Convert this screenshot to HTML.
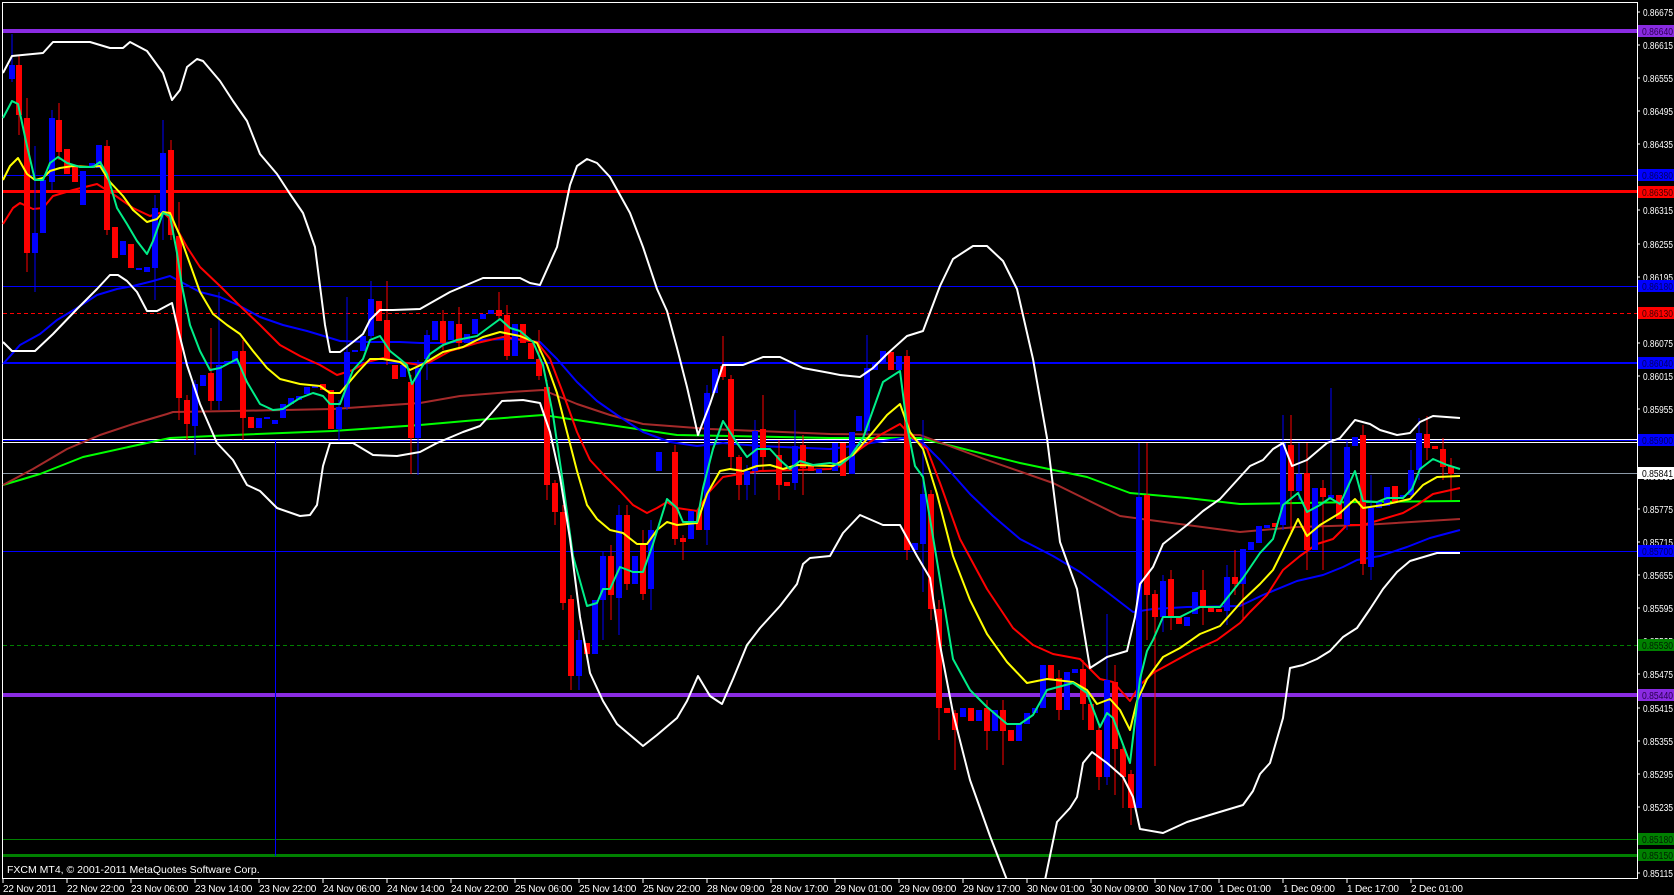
<!DOCTYPE html>
<html><head><meta charset="utf-8"><style>
html,body{margin:0;padding:0;background:#000;}
body{width:1674px;height:895px;overflow:hidden;}
svg{display:block;}
text{font-family:"Liberation Sans",sans-serif;font-size:11px;}
.p text{font-size:10px;}
.t text{font-size:10px;letter-spacing:-0.2px;}
</style></head><body>
<svg width="1674" height="895" viewBox="0 0 1674 895" xmlns="http://www.w3.org/2000/svg">
<rect width="1674" height="895" fill="#000"/>
<path d="M2.5 2.5H1637.5V878.5H2.5Z" fill="none" stroke="#fff" stroke-width="1"/>
<g shape-rendering="crispEdges">
<rect x="3" y="29" width="1634" height="4" fill="#8a2be2"/>
<rect x="3" y="175" width="1634" height="1" fill="#0000ff"/>
<rect x="3" y="190" width="1634" height="3" fill="#ff0000"/>
<rect x="3" y="286" width="1634" height="1" fill="#0000ff"/>
<line x1="3" y1="313.5" x2="1637" y2="313.5" stroke="#ff0000" stroke-dasharray="4,3"/>
<rect x="3" y="362" width="1634" height="2" fill="#0000ff"/>
<rect x="3" y="439" width="1634" height="1" fill="#fff"/>
<rect x="3" y="440" width="1634" height="1" fill="#0000ff"/>
<rect x="3" y="442" width="1634" height="1" fill="#fff"/>
<rect x="3" y="473" width="1634" height="1" fill="#8c9aa8"/>
<rect x="3" y="551" width="1634" height="1" fill="#0000ff"/>
<line x1="3" y1="645.5" x2="1637" y2="645.5" stroke="#008000" stroke-dasharray="4,3"/>
<rect x="3" y="693" width="1634" height="4" fill="#8a2be2"/>
<rect x="3" y="839" width="1634" height="1" fill="#008000"/>
<rect x="3" y="854" width="1634" height="3" fill="#008000"/>
<rect x="275" y="441" width="1" height="415" fill="#0000ff"/>
</g>
<g fill="none" stroke-width="2" stroke-linejoin="round">
<polyline stroke="#00ff00" points="3,485 40,474 83,457 133,446 170,438 233,435 333,431 420,425 477,420 543,415 610,425 677,435 830,438 920,438 1020,463 1087,477 1130,493 1187,498 1240,504 1297,503 1363,502 1460,501"/>
<polyline stroke="#a52a2a" points="3,485 33,469 67,449 100,435 133,424 167,414 173,412 233,411 333,409 420,403 460,396 510,392 543,390 577,404 610,415 643,424 710,429 830,434 920,435 987,460 1053,483 1120,516 1187,525 1240,532 1297,527 1363,525 1460,519"/>
<polyline stroke="#0000ff" points="3,364 20,345 40,334 57,320 77,308 97,295 117,289 133,286 153,281 170,276 183,283 200,292 220,297 240,306 260,317 283,325 307,331 327,337 340,341 367,342 400,342 420,343 443,343 477,340 510,339 540,342 557,359 577,382 597,401 617,415 643,432 670,442 697,446 723,443 760,446 830,449 853,446 877,442 903,438 923,443 940,460 970,494 993,516 1020,539 1053,556 1080,572 1107,592 1133,612 1153,609 1187,607 1240,606 1263,595 1297,581 1323,575 1343,567 1357,560 1380,556 1407,547 1430,538 1460,530"/>
<polyline stroke="#ff0000" points="3,224 13,208 20,203 33,209 43,208 53,196 73,190 97,184 113,194 133,208 150,216 163,212 173,222 187,247 200,267 220,286 240,306 260,325 280,345 300,356 320,365 337,375 353,370 367,362 383,358 400,362 420,365 430,362 450,351 477,343 503,337 523,340 537,342 550,359 563,393 577,432 590,460 603,474 620,491 633,505 647,513 657,508 667,502 677,508 697,511 710,491 723,477 740,474 760,471 830,469 840,466 860,449 880,435 900,424 913,438 927,449 940,483 960,539 987,589 1013,628 1033,645 1053,654 1080,659 1100,679 1113,682 1130,701 1140,685 1153,673 1173,662 1193,651 1217,640 1240,623 1250,612 1267,595 1283,570 1300,556 1317,544 1333,539 1347,525 1363,525 1383,519 1403,513 1417,505 1433,494 1460,488"/>
</g>
<path fill="none" stroke="#ff0000" stroke-width="1" d="M19 56V135M27 98V272M59 103V160M107 140V235M171 140V240M179 202V420M187 395V440M211 328V410M243 340V440M387 281V365M411 375V474M443 310V350M459 307V350M499 292V320M507 305V360M539 330V380M547 380V500M555 480V525M563 505V610M571 595V690M611 545V620M627 505V590M643 530V600M675 445V545M683 535V560M723 336V380M731 375V470M739 455V500M763 395V470M779 440V500M803 435V495M907 350V560M931 490V620M939 600V740M955 710V770M987 700V750M1003 700V765M1059 670V720M1083 660V720M1099 725V790M1115 665V795M1123 745V808M1131 770V825M1147 443V640M1155 590V766M1171 570V630M1203 570V625M1235 550V595M1243 560V620M1291 415V535M1307 443V570M1323 480V570M1363 425V575M1427 416V460M1443 438V480M1451 458V500"/>
<path fill="none" stroke="#0000ff" stroke-width="1" d="M12 34V82M35 146V292M52 110V190M155 195V300M163 120V240M195 380V455M219 292V410M339 400V440M347 297V410M371 281V340M418 360V475M427 330V380M579 630V690M603 552V640M619 505V635M651 520V610M707 385V545M747 465V500M755 420V495M795 410V490M867 335V435M923 420V592M1107 614V785M1139 443V808M1163 575V632M1227 565V625M1283 415V530M1299 443V500M1331 388V500M1347 440V530M1371 475V580M1411 450V500M1419 418V480"/>
<path fill="none" stroke="#ff0000" stroke-width="6" d="M19 65V115M27 118V253M59 120V152M67 149V174M75 166V182M107 146V230M115 227V258M131 244V268M171 150V235M179 236V398M187 400V424M211 373V401M243 351V418M251 417V428M323 384V390M331 390V429M379 301V321M387 320V359M395 365V379M411 382V438M443 321V343M459 324V343M499 310V316M507 315V356M523 324V343M531 343V359M539 359V376M547 387V485M555 483V512M563 512V603M571 599V676M587 643V654M611 556V595M627 515V584M643 544V594M675 452V539M683 538V542M699 510V530M723 366V377M731 379V457M739 457V485M763 429V457M779 455V485M787 482V486M803 445V468M811 465V471M843 443V476M891 352V370M907 356V550M931 494V609M939 609V708M947 708V713M955 713V730M971 708V721M987 708V731M1003 710V731M1011 730V741M1051 665V679M1059 678V710M1083 669V704M1091 704V730M1099 730V777M1115 682V749M1123 749V777M1131 774V808M1147 495V595M1155 594V617M1171 579V617M1179 617V624M1203 590V606M1211 606V612M1219 609V612M1235 577V584M1275 523V527M1291 445V491M1307 473V550M1323 488V497M1339 495V519M1363 435V564M1395 486V502M1427 434V448M1435 446V449M1443 449V467M1451 466V474"/>
<path fill="none" stroke="#0000ff" stroke-width="6" d="M12 65V79M35 233V253M43 180V233M52 118V182M83 171V205M92 163V168M99 145V168M123 241V255M139 268V270M147 267V272M155 208V268M163 153V213M195 384V426M203 375V386M219 365V401M227 361V363M235 351V362M259 418V428M267 417V419M275 420V424M283 404V418M291 398V404M299 396V400M307 387V394M315 386V388M339 407V429M347 352V407M355 350V352M363 336V351M371 299V336M403 365V377M418 368V438M427 335V359M435 321V340M451 321V340M467 334V343M475 319V334M483 314V319M491 310V314M515 324V356M579 640V676M595 600V654M603 556V600M619 515V598M635 556V584M651 530V589M659 452V471M691 511V539M707 393V530M715 369V393M747 471V485M755 431V471M795 446V483M819 469V473M835 443V471M852 432V474M859 416V431M867 368V431M875 364V370M883 351V362M899 356V370M915 543V550M923 494V544M963 708V717M979 710V721M995 710V731M1019 724V741M1027 713V724M1035 708V713M1043 665V708M1067 672V710M1075 669V673M1107 680V777M1139 497V808M1163 581V617M1187 617V626M1195 592V614M1227 577V611M1243 549V584M1251 542V550M1259 526V543M1267 525V528M1283 443V525M1299 474V491M1315 488V550M1331 495V498M1347 447V525M1355 437V446M1371 508V567M1379 502V508M1387 487V506M1403 495V497M1411 470V495M1419 433V470"/>
<g fill="none" stroke-width="2" stroke-linejoin="round">
<polyline stroke="#ffff00" points="3,180 10,166 18,158 27,174 35,180 43,178 50,171 60,168 73,166 90,167 100,166 110,182 123,196 133,210 147,222 157,219 163,212 170,213 180,236 190,264 200,292 213,314 227,325 240,334 253,351 267,368 280,379 300,384 320,386 330,393 340,393 357,373 370,359 383,359 400,362 410,370 423,364 443,352 463,347 483,337 500,332 520,336 537,343 547,365 557,393 567,432 577,471 587,505 597,519 610,530 623,533 637,544 647,544 657,530 667,522 677,525 697,523 707,494 720,471 730,469 743,471 757,466 770,465 783,469 797,465 833,466 853,455 873,432 887,415 900,404 910,432 923,449 937,494 953,556 970,600 987,634 1007,662 1027,683 1047,679 1073,682 1087,690 1097,704 1110,699 1120,710 1130,730 1137,701 1147,679 1163,657 1180,648 1200,634 1220,626 1243,600 1260,584 1273,570 1283,550 1298,519 1307,536 1320,525 1340,513 1355,499 1363,508 1383,505 1410,499 1423,485 1437,477 1460,476"/>
<polyline stroke="#00ee88" points="3,118 12,101 18,104 27,146 35,180 43,180 50,163 58,157 67,163 80,167 93,167 100,162 107,174 117,208 127,224 137,241 147,254 153,241 163,213 170,216 177,253 182,286 190,325 200,351 210,370 220,368 237,359 247,382 260,404 273,410 283,409 300,398 313,393 323,396 330,404 340,404 353,370 363,359 370,340 380,336 390,351 400,359 407,365 412,384 420,370 430,354 443,345 457,340 477,336 500,319 510,328 520,331 533,342 543,365 553,415 563,483 573,556 587,606 597,603 603,589 610,589 620,567 633,572 643,572 653,544 667,499 677,508 683,522 697,522 703,488 713,449 723,421 737,443 747,457 757,449 770,449 780,460 790,469 800,461 813,465 830,463 840,465 850,457 863,438 883,382 900,371 907,426 915,466 923,477 937,561 953,659 970,690 987,707 1007,724 1020,724 1033,715 1047,690 1073,683 1087,693 1100,727 1107,713 1113,718 1130,763 1140,679 1147,651 1153,640 1163,617 1180,617 1190,612 1200,607 1220,607 1243,578 1260,553 1273,539 1283,505 1298,493 1307,512 1320,505 1330,498 1340,504 1355,471 1363,501 1377,502 1387,498 1403,498 1412,489 1420,469 1433,459 1447,465 1460,469"/>
</g>
<g fill="none" stroke="#fff" stroke-width="2" stroke-linejoin="round">
<polyline points="3,73 12,56 43,53 53,42 90,42 110,48 123,48 130,42 147,51 163,73 172,100 180,90 187,67 197,59 203,61 220,81 233,101 247,121 260,154 277,174 290,194 303,213 315,247 320,286 325,325 330,352 340,352 353,342 363,334 370,320 380,310 393,310 420,309 450,292 483,278 520,278 530,283 540,285 557,247 570,185 577,166 587,159 597,163 610,177 630,213 643,247 657,289 667,311 677,348 687,387 698,435 710,404 723,365 743,365 763,357 780,357 803,368 830,373 840,375 860,377 873,368 887,354 907,336 923,331 940,286 953,259 973,246 987,246 1003,261 1017,289 1033,359 1047,438 1060,542 1077,589 1090,668 1107,657 1127,651 1135,617 1140,584 1153,567 1163,544 1187,525 1203,511 1220,499 1250,466 1263,460 1273,449 1283,443 1292,466 1307,460 1327,443 1340,438 1355,420 1370,424 1380,430 1397,435 1410,433 1420,422 1433,416 1460,418"/>
<polyline points="3,342 12,351 35,351 53,334 77,309 97,289 110,275 118,275 127,281 137,292 147,311 157,311 172,303 177,325 187,365 200,404 217,443 233,460 247,485 260,491 277,508 300,516 310,515 317,505 323,466 330,443 353,443 373,455 397,456 420,452 437,443 463,432 480,426 490,415 502,401 523,400 540,403 550,432 560,477 570,539 580,617 590,673 603,701 617,724 643,746 657,735 677,718 687,701 698,676 710,696 722,704 733,679 747,645 760,628 780,606 797,584 803,564 810,558 830,556 843,533 860,515 883,525 900,525 917,556 930,578 940,645 953,713 970,780 990,836 1007,880"/>
<polyline points="1045,880 1057,822 1070,808 1077,797 1083,763 1092,752 1107,763 1123,777 1133,797 1140,829 1163,833 1187,822 1213,814 1243,805 1253,791 1260,774 1270,763 1283,718 1290,668 1303,665 1317,659 1330,651 1343,637 1357,628 1370,609 1383,589 1397,572 1410,561 1437,553 1460,553"/>
</g>
<rect x="0" y="879" width="1674" height="16" fill="#000"/>
<path d="M2.5 878.5H1637.5M1637.5 2.5V878.5" fill="none" stroke="#fff"/>
<g stroke="#fff" shape-rendering="crispEdges">
<path d="M1637 12h3M1637 45h3M1637 78h3M1637 111h3M1637 144h3M1637 177h3M1637 210h3M1637 244h3M1637 277h3M1637 310h3M1637 343h3M1637 376h3M1637 409h3M1637 442h3M1637 476h3M1637 509h3M1637 542h3M1637 575h3M1637 608h3M1637 641h3M1637 674h3M1637 708h3M1637 741h3M1637 774h3M1637 807h3M1637 840h3M1637 873h3"/>
</g>
<g class="p" fill="#fff">
<text x="1643" y="16" textLength="30" lengthAdjust="spacingAndGlyphs">0.86675</text><text x="1643" y="49" textLength="30" lengthAdjust="spacingAndGlyphs">0.86615</text><text x="1643" y="82" textLength="30" lengthAdjust="spacingAndGlyphs">0.86555</text><text x="1643" y="115" textLength="30" lengthAdjust="spacingAndGlyphs">0.86495</text><text x="1643" y="148" textLength="30" lengthAdjust="spacingAndGlyphs">0.86435</text><text x="1643" y="181" textLength="30" lengthAdjust="spacingAndGlyphs">0.86375</text><text x="1643" y="214" textLength="30" lengthAdjust="spacingAndGlyphs">0.86315</text><text x="1643" y="248" textLength="30" lengthAdjust="spacingAndGlyphs">0.86255</text><text x="1643" y="281" textLength="30" lengthAdjust="spacingAndGlyphs">0.86195</text><text x="1643" y="314" textLength="30" lengthAdjust="spacingAndGlyphs">0.86135</text><text x="1643" y="347" textLength="30" lengthAdjust="spacingAndGlyphs">0.86075</text><text x="1643" y="380" textLength="30" lengthAdjust="spacingAndGlyphs">0.86015</text><text x="1643" y="413" textLength="30" lengthAdjust="spacingAndGlyphs">0.85955</text><text x="1643" y="446" textLength="30" lengthAdjust="spacingAndGlyphs">0.85895</text><text x="1643" y="480" textLength="30" lengthAdjust="spacingAndGlyphs">0.85835</text><text x="1643" y="513" textLength="30" lengthAdjust="spacingAndGlyphs">0.85775</text><text x="1643" y="546" textLength="30" lengthAdjust="spacingAndGlyphs">0.85715</text><text x="1643" y="579" textLength="30" lengthAdjust="spacingAndGlyphs">0.85655</text><text x="1643" y="612" textLength="30" lengthAdjust="spacingAndGlyphs">0.85595</text><text x="1643" y="645" textLength="30" lengthAdjust="spacingAndGlyphs">0.85535</text><text x="1643" y="678" textLength="30" lengthAdjust="spacingAndGlyphs">0.85475</text><text x="1643" y="712" textLength="30" lengthAdjust="spacingAndGlyphs">0.85415</text><text x="1643" y="745" textLength="30" lengthAdjust="spacingAndGlyphs">0.85355</text><text x="1643" y="778" textLength="30" lengthAdjust="spacingAndGlyphs">0.85295</text><text x="1643" y="811" textLength="30" lengthAdjust="spacingAndGlyphs">0.85235</text><text x="1643" y="844" textLength="30" lengthAdjust="spacingAndGlyphs">0.85175</text><text x="1643" y="877" textLength="30" lengthAdjust="spacingAndGlyphs">0.85115</text>
</g>
<g class="p">
<rect x="1638" y="25" width="36" height="12" fill="#8a2be2"/><text x="1642" y="35" fill="#2a0050" textLength="31" lengthAdjust="spacingAndGlyphs">0.86640</text>
<rect x="1638" y="169" width="36" height="12" fill="#0000ff"/><text x="1642" y="179" fill="#000060" textLength="31" lengthAdjust="spacingAndGlyphs">0.86380</text>
<rect x="1638" y="186" width="36" height="12" fill="#ff0000"/><text x="1642" y="196" fill="#400000" textLength="31" lengthAdjust="spacingAndGlyphs">0.86350</text>
<rect x="1638" y="280" width="36" height="12" fill="#0000ff"/><text x="1642" y="290" fill="#000060" textLength="31" lengthAdjust="spacingAndGlyphs">0.86180</text>
<rect x="1638" y="307" width="36" height="12" fill="#ff0000"/><text x="1642" y="317" fill="#400000" textLength="31" lengthAdjust="spacingAndGlyphs">0.86130</text>
<rect x="1638" y="357" width="36" height="12" fill="#0000ff"/><text x="1642" y="367" fill="#000060" textLength="31" lengthAdjust="spacingAndGlyphs">0.86040</text>
<rect x="1638" y="434" width="36" height="12" fill="#0000ff"/><text x="1642" y="444" fill="#000060" textLength="31" lengthAdjust="spacingAndGlyphs">0.85900</text>
<rect x="1638" y="467" width="36" height="12" fill="#fff"/><text x="1642" y="477" fill="#000" textLength="31" lengthAdjust="spacingAndGlyphs">0.85841</text>
<rect x="1638" y="545" width="36" height="12" fill="#0000ff"/><text x="1642" y="555" fill="#000060" textLength="31" lengthAdjust="spacingAndGlyphs">0.85700</text>
<rect x="1638" y="639" width="36" height="12" fill="#008000"/><text x="1642" y="649" fill="#002000" textLength="31" lengthAdjust="spacingAndGlyphs">0.85530</text>
<rect x="1638" y="689" width="36" height="12" fill="#8a2be2"/><text x="1642" y="699" fill="#2a0050" textLength="31" lengthAdjust="spacingAndGlyphs">0.85440</text>
<rect x="1638" y="833" width="36" height="12" fill="#008000"/><text x="1642" y="843" fill="#002000" textLength="31" lengthAdjust="spacingAndGlyphs">0.85180</text>
<rect x="1638" y="849" width="36" height="12" fill="#008000"/><text x="1642" y="859" fill="#002000" textLength="31" lengthAdjust="spacingAndGlyphs">0.85150</text>
</g>
<text x="7" y="873" fill="#fff" style="font-size:10.5px">FXCM MT4, © 2001-2011 MetaQuotes Software Corp.</text>
<path stroke="#fff" shape-rendering="crispEdges" d="M3 879v4M67 879v4M131 879v4M195 879v4M259 879v4M323 879v4M387 879v4M451 879v4M515 879v4M579 879v4M643 879v4M707 879v4M771 879v4M835 879v4M899 879v4M963 879v4M1027 879v4M1091 879v4M1155 879v4M1219 879v4M1283 879v4M1347 879v4M1411 879v4"/>
<g class="t" fill="#fff">
<text x="3" y="892">22 Nov 2011</text><text x="67" y="892">22 Nov 22:00</text><text x="131" y="892">23 Nov 06:00</text><text x="195" y="892">23 Nov 14:00</text><text x="259" y="892">23 Nov 22:00</text><text x="323" y="892">24 Nov 06:00</text><text x="387" y="892">24 Nov 14:00</text><text x="451" y="892">24 Nov 22:00</text><text x="515" y="892">25 Nov 06:00</text><text x="579" y="892">25 Nov 14:00</text><text x="643" y="892">25 Nov 22:00</text><text x="707" y="892">28 Nov 09:00</text><text x="771" y="892">28 Nov 17:00</text><text x="835" y="892">29 Nov 01:00</text><text x="899" y="892">29 Nov 09:00</text><text x="963" y="892">29 Nov 17:00</text><text x="1027" y="892">30 Nov 01:00</text><text x="1091" y="892">30 Nov 09:00</text><text x="1155" y="892">30 Nov 17:00</text><text x="1219" y="892">1 Dec 01:00</text><text x="1283" y="892">1 Dec 09:00</text><text x="1347" y="892">1 Dec 17:00</text><text x="1411" y="892">2 Dec 01:00</text>
</g>
</svg>
</body></html>
